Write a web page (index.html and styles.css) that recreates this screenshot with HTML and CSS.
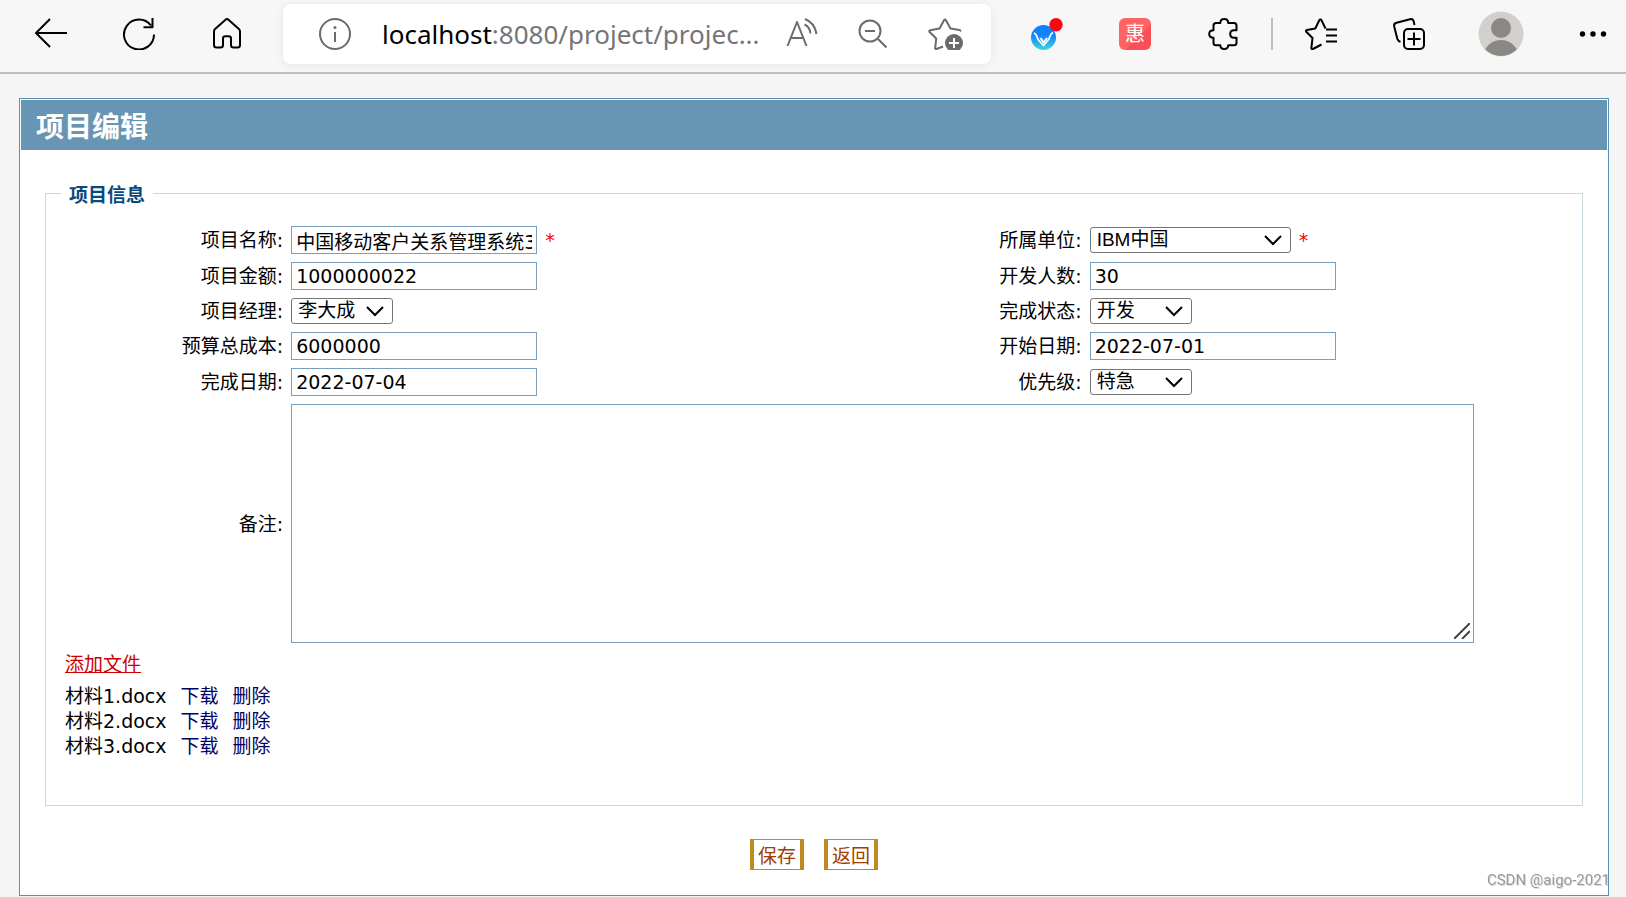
FILE: index.html
```html
<!DOCTYPE html>
<html lang="zh-CN">
<head>
<meta charset="utf-8">
<title>项目编辑</title>
<link rel="stylesheet" href="styles.css">
</head>
<body>
<header class="toolbar">
  <button class="tool" type="button" aria-label="Back">
    <svg class="icon" viewBox="0 0 32 32"><path d="M15 1 1 15l14 14M1 15h31"/></svg>
  </button>
  <button class="tool" type="button" aria-label="Refresh">
    <svg class="icon" viewBox="0 0 32 32"><path d="M31 16.500A15 15 0 1 1 28 7.500M29.500 0v9.200h-9"/></svg>
  </button>
  <button class="tool" type="button" aria-label="Home">
    <svg class="icon" viewBox="0 0 32 32"><path d="M3 13.500c0-1 .4-1.900 1.100-2.600L14.500 1.700c.9-.8 2.100-.8 3 0l10.400 9.200c.7.700 1.100 1.600 1.100 2.600V27c0 1.500-1 2.500-2.500 2.500h-4c-1.500 0-2.500-1-2.500-2.500v-6.500c0-1.400-1-2.300-2.300-2.300h-3.400c-1.300 0-2.300.9-2.300 2.300V27c0 1.500-1 2.500-2.500 2.500h-4C4 29.500 3 28.500 3 27z"/></svg>
  </button>
  <div class="address">
    <svg class="icon grey" viewBox="0 0 32 32"><circle cx="16" cy="16" r="15"/><path d="M16 14v10"/><circle class="fill" cx="16" cy="9.500" r="1.500"/></svg>
    <div class="url"><span class="host">localhost</span>:8080/project/projec...</div>
    <button class="tool small" type="button" aria-label="Read aloud">
      <svg class="icon grey" viewBox="0 0 32 32"><path d="M1.500 28 11 4l9.500 24M5 20h12.500M18.500 6.500c3.500 1.500 5.500 4.500 6 9M19 1c6.500 2.500 10.500 8 11.500 15"/></svg>
    </button>
    <button class="tool small" type="button" aria-label="Zoom out">
      <svg class="icon grey" viewBox="1 0 32 32"><circle cx="13" cy="13" r="10.500"/><path d="M21 21l8.500 8.500M8 13h10"/></svg>
    </button>
    <button class="tool small" type="button" aria-label="Add favorite">
      <svg class="icon grey wide" viewBox="0 0 36 32"><path d="M15 28.500 8.500 31c-.8.300-1.400-.2-1.300-1l1-9.500L1.600 14c-.6-.7-.3-1.500.6-1.700l9.300-1.800L16 2.200c.5-.8 1.400-.8 1.900 0l4.600 8.300 8.800 1.500c.9.200 1.300.7.900 1.500"/><circle class="fill" cx="26" cy="25" r="9"/><path class="plus" d="M26 20v10M21 25h10"/></svg>
    </button>
  </div>
  <button class="tool" type="button" aria-label="Extension">
    <svg class="icon bare" viewBox="0 0 32 32">
      <defs><linearGradient id="bird" x1="0" y1="0" x2="0" y2="1"><stop offset=".4" stop-color="#1282fa"/><stop offset="1" stop-color="#3fd6e0"/></linearGradient></defs>
      <circle cx="12.500" cy="19.500" r="12.500" fill="url(#bird)"/>
      <path d="M3 15c2 1 3 3 4 6.500l5.500 6L18 21c1-3.500 2-5.500 4-6.500M9.500 20l3 4.500 3.500-4.500" fill="none" stroke="#fff" stroke-width="1.800"/>
      <circle cx="25" cy="6.700" r="6.700" fill="#f90610"/>
    </svg>
  </button>
  <button class="tool" type="button" aria-label="惠"><span class="coupon">惠</span></button>
  <button class="tool" type="button" aria-label="Extensions">
    <svg class="icon" viewBox="-1 0 32 32"><path d="M8 5h4.300C12.300 2.500 14 1 16.200 1s4 1.500 4 4H26c1.500 0 2.500 1 2.500 2.500v4.700h-2.500c-2.300 0-3.800 1.700-3.800 3.800s1.500 3.800 3.800 3.800h2.500v5c0 1.500-1 2.500-2.500 2.500h-5.800c0 2.300-1.800 3.700-4 3.700s-3.900-1.400-3.900-3.700H8c-1.500 0-2.500-1-2.500-2.500v-5C3 19.800 1.200 18.300 1.200 16S3 12.200 5.500 12.200V7.500C5.500 6 6.500 5 8 5z"/></svg>
  </button>
  <span class="divider"></span>
  <button class="tool" type="button" aria-label="Favorites">
    <svg class="icon" viewBox="0 0 32 32"><path d="M16.500 26.500 8 31c-1 .5-1.800 0-1.600-1.200L7.500 20 1.300 13.800c-.7-.8-.4-1.700.7-1.900l8.300-1.400 4-8.300c.5-1 1.700-1 2.200 0l4 8.300M21 11.500h11M21 17.500h11M21 23.500h11"/></svg>
  </button>
  <button class="tool" type="button" aria-label="Collections">
    <svg class="icon" viewBox="0 0 32 32"><path d="M7.500 23.800c-1.700-.3-2.700-1.200-3.200-3L1.200 8.500C.8 6.600 1.600 5.200 3.500 4.700L17 1.200c1.900-.4 3.200.4 3.700 2.200L21.500 7"/><rect x="11" y="11" width="20" height="20" rx="4"/><path d="M21 14.500v13M14.500 21h13"/></svg>
  </button>
  <button class="tool profile" type="button" aria-label="Profile">
    <svg class="avatar" viewBox="0 0 46 46">
      <defs><clipPath id="disc"><circle cx="23" cy="23" r="22"/></clipPath></defs>
      <circle cx="23" cy="23" r="22.500" fill="#d1d0cc"/>
      <g clip-path="url(#disc)" fill="#8b8784"><circle cx="23" cy="17" r="10"/><ellipse cx="23" cy="46" rx="17.500" ry="17"/></g>
    </svg>
  </button>
  <button class="tool more" type="button" aria-label="Settings">
    <svg class="icon bare" viewBox="0 0 32 32"><circle cx="5.500" cy="16" r="2.700"/><circle cx="16" cy="16" r="2.700"/><circle cx="26.500" cy="16" r="2.700"/></svg>
  </button>
</header>

<main class="panel">
  <h1 class="title">项目编辑</h1>
  <form class="form">
    <fieldset class="group">
      <legend class="legend">项目信息</legend>
      <div class="fields">
        <label class="label" for="name">项目名称:</label>
        <div class="field"><input class="text" id="name" type="text" value="中国移动客户关系管理系统3"><span class="required">*</span></div>
        <label class="label" for="company">所属单位:</label>
        <div class="field"><span class="drop long"><select class="select" id="company"><option>IBM中国</option></select><svg class="chevron" viewBox="0 0 18 11"><path d="M1 1l8 8 8-8"/></svg></span><span class="required">*</span></div>

        <label class="label" for="amount">项目金额:</label>
        <div class="field"><input class="text" id="amount" type="text" value="1000000022"></div>
        <label class="label" for="people">开发人数:</label>
        <div class="field"><input class="text" id="people" type="text" value="30"></div>

        <label class="label" for="manager">项目经理:</label>
        <div class="field"><span class="drop"><select class="select" id="manager"><option>李大成</option></select><svg class="chevron" viewBox="0 0 18 11"><path d="M1 1l8 8 8-8"/></svg></span></div>
        <label class="label" for="status">完成状态:</label>
        <div class="field"><span class="drop"><select class="select" id="status"><option>开发</option></select><svg class="chevron" viewBox="0 0 18 11"><path d="M1 1l8 8 8-8"/></svg></span></div>

        <label class="label" for="cost">预算总成本:</label>
        <div class="field"><input class="text" id="cost" type="text" value="6000000"></div>
        <label class="label" for="start">开始日期:</label>
        <div class="field"><input class="text" id="start" type="text" value="2022-07-01"></div>

        <label class="label" for="end">完成日期:</label>
        <div class="field"><input class="text" id="end" type="text" value="2022-07-04"></div>
        <label class="label" for="priority">优先级:</label>
        <div class="field"><span class="drop"><select class="select" id="priority"><option>特急</option></select><svg class="chevron" viewBox="0 0 18 11"><path d="M1 1l8 8 8-8"/></svg></span></div>

        <label class="label" for="remark">备注:</label>
        <div class="remark"><textarea class="area" id="remark" rows="9"></textarea><svg class="grip" viewBox="0 0 16 16"><path d="M0 16 16 0M8 16l8-8"/></svg></div>
      </div>
      <div class="files">
        <a class="add" href="#">添加文件</a>
        <ul class="list">
          <li class="file">材料1.docx <a class="action" href="#">下载</a><a class="action" href="#">删除</a></li>
          <li class="file">材料2.docx <a class="action" href="#">下载</a><a class="action" href="#">删除</a></li>
          <li class="file">材料3.docx <a class="action" href="#">下载</a><a class="action" href="#">删除</a></li>
        </ul>
      </div>
    </fieldset>
    <div class="buttons">
      <button class="button" type="button">保存</button>
      <button class="button" type="button">返回</button>
    </div>
  </form>
</main>
<div class="watermark">CSDN @aigo-2021</div>
</body>
</html>
```

FILE: styles.css
```css
* { box-sizing: border-box; }

body {
  margin: 0;
  background: #f5f5f5;
  color: #000;
  font: 19px/25px "DejaVu Sans", "Noto Sans CJK SC", sans-serif;
}

.toolbar {
  display: flex;
  align-items: center;
  padding: 4px 0 8px 7px;
  border-bottom: 2px solid #bfbfbf;
  background: #f7f7f7;
}

.tool {
  display: flex;
  flex: none;
  align-items: center;
  justify-content: center;
  width: 88px;
  height: 60px;
  padding: 0;
  border: 0;
  background: none;
}
.tool.small { width: 72px; }
.tool.profile { width: 96px; }
.tool.more { width: 77px; padding-left: 11px; }

.icon {
  flex: none;
  width: 32px;
  height: 32px;
  fill: none;
  stroke: #000;
  stroke-width: 2;
  stroke-linejoin: round;
}
.icon.wide { width: 36px; }
.icon.grey { stroke: #6b6b6b; }
.icon.bare { fill: #000; stroke: none; }
.icon .fill { fill: #6b6b6b; stroke: none; }
.icon .plus { stroke: #fff; }
.avatar { width: 46px; height: 46px; }

.address {
  display: flex;
  flex: 1;
  align-items: center;
  min-width: 0;
  height: 60px;
  margin: 0 12px;
  padding: 0 9px 0 36px;
  border-radius: 8px;
  background: #fff;
  box-shadow: 0 1px 10px rgba(0, 0, 0, .08);
}
.url {
  flex: 1;
  min-width: 0;
  margin-left: 31px;
  overflow: hidden;
  color: #757575;
  font: 26px/40px "Noto Sans", sans-serif;
  white-space: nowrap;
}
.host { color: #000; }

.coupon {
  width: 32px;
  height: 32px;
  border-radius: 6px;
  background: linear-gradient(135deg, #ff6464 60%, #f94f57 60%);
  color: #fff;
  font: 20px/30px "Noto Sans CJK SC", sans-serif;
}
.divider {
  width: 2px;
  height: 32px;
  margin: 0 4px;
  background: #bfbfbf;
}

.panel {
  margin: 24px 17px 0 19px;
  padding: 1px;
  border: 1px solid #5b8fb3;
  background: #fff;
}
.title {
  margin: 0;
  padding: 0 15px;
  background: #6795b4;
  color: #fff;
  font: bold 28px/50px "Noto Sans CJK SC", sans-serif;
}
.form { padding: 29px 24px 24px; }

.group {
  min-width: 0;
  margin: 0;
  padding: 18px 15px 46px;
  border: 1px solid #c8d7de;
}
.legend {
  padding: 4px 8px 0;
  color: #064b80;
  font-weight: bold;
}
.fields {
  display: grid;
  grid-template-columns: 15.1% 1fr 13% 31.6%;
  row-gap: 8px;
  align-items: center;
  padding: 0 4px;
}
.label {
  padding-right: 8px;
  line-height: 26px;
  text-align: right;
}
.field {
  display: flex;
  align-items: center;
}
.text {
  width: 246px;
  height: 28px;
  padding: 0 4px;
  border: 1px solid #7b9ebd;
  background: #fff;
  color: #000;
  font: 19px "DejaVu Sans", "Noto Sans CJK SC", sans-serif;
}
.required {
  margin-left: 8px;
  color: #f00;
}
.drop {
  position: relative;
  display: flex;
  width: 102px;
}
.drop.long { width: 201px; }
.select {
  width: 100%;
  height: 26px;
  padding: 0 6px;
  border: 1px solid #767676;
  border-radius: 3px;
  appearance: none;
  background: #fff;
  color: #000;
  font: 19px/22px "Liberation Sans", "Noto Sans CJK SC", sans-serif;
}
.chevron {
  position: absolute;
  top: 8px;
  right: 9px;
  width: 18px;
  height: 11px;
  fill: none;
  stroke: #000;
  stroke-width: 2;
  pointer-events: none;
}
.remark {
  position: relative;
  display: flex;
  grid-column: 2 / -1;
  width: 93%;
}
.area {
  width: 100%;
  height: 239px;
  border: 1px solid #7b9ebd;
  background: #fff;
  font: inherit;
  resize: none;
}
.grip {
  position: absolute;
  right: 4px;
  bottom: 4px;
  width: 16px;
  height: 16px;
  stroke: #444;
  stroke-width: 2;
}

.files { padding: 9px 4px 0; }
.add { color: #c00; }
.list {
  margin: 7px 0 0;
  padding: 0;
  list-style: none;
}
.file {
  display: flex;
  gap: 14px;
}
.action {
  color: #006;
  text-decoration: none;
}

.buttons {
  display: flex;
  justify-content: center;
  gap: 20px;
  margin-top: 33px;
}
.button {
  width: 54px;
  height: 31px;
  padding: 0;
  border: solid #c08a22;
  border-width: 1px 4px;
  background: #fff;
  color: #a04000;
  font: 19px/29px "Noto Sans CJK SC", sans-serif;
}

.watermark {
  position: fixed;
  right: 16px;
  bottom: 6px;
  color: #999;
  font: 15px/22px Roboto, sans-serif;
  text-shadow: 1px 1px 0 #ddd;
}
```
